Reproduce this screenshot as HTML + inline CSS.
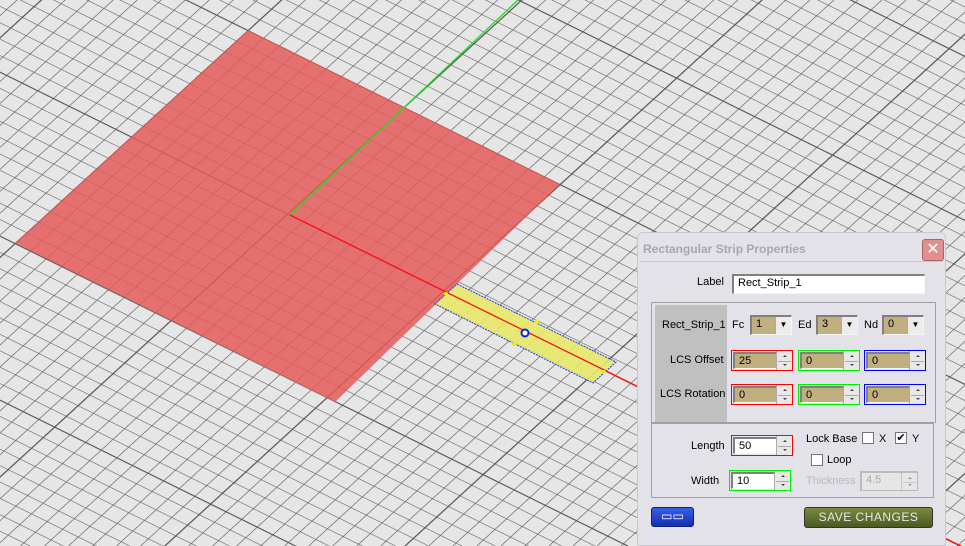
<!DOCTYPE html>
<html><head><style>
body{margin:0;width:965px;height:546px;overflow:hidden;background:#e6e6e6;font-family:Tahoma,"Liberation Sans",sans-serif;font-size:11px;}
#dlg{position:absolute;left:637px;top:232px;width:309px;height:314px;background:#e3e2e8;border:1px solid #c8c8d0;box-sizing:border-box;border-radius:6px 6px 0 0;}
.title{position:absolute;left:5px;top:9px;font-weight:bold;font-size:12px;color:#a7a7ae;}
.close{position:absolute;left:284px;top:6px;width:20px;height:20px;background:#e09090;border:1px solid #b06060;border-radius:3px;color:#fff;font-size:16px;line-height:19px;text-align:center;}
.abs{position:absolute;}
.lbl{position:absolute;color:#000;}
.inp{position:absolute;background:#fff;border-top:2px solid #808080;border-left:2px solid #808080;border-bottom:1px solid #f5f5f5;border-right:1px solid #f5f5f5;box-sizing:border-box;padding:1px 4px;}
.tan{background:#c0b080;}
.dd{position:absolute;right:0;top:0;width:16px;height:100%;background:#ececec;border-left:1px solid #aaa;box-sizing:border-box;font-size:8px;text-align:center;line-height:15px;}
.spin{position:absolute;right:0;top:0;width:16px;height:100%;background:#e8e8e8;border-left:1px solid #aaa;box-sizing:border-box;}
.spin:before{content:"";position:absolute;left:6px;top:2px;border:2px solid transparent;border-bottom-color:#444;}
.spin:after{content:"";position:absolute;left:6px;bottom:2px;border:2px solid transparent;border-top-color:#444;}
.spin i{position:absolute;left:1px;right:1px;top:50%;border-top:1px solid #aaa;}
.fr{position:absolute;border:1px solid;width:62px;height:21px;box-sizing:border-box;padding:1px;}
.fr .inp{position:static;width:100%;height:100%;}
.cb{position:absolute;width:12px;height:12px;background:#fff;border:1px solid #777;box-sizing:border-box;font-size:11px;line-height:10px;text-align:center;}
</style></head><body>
<svg width="965" height="546" style="position:absolute;left:0;top:0">
<defs>
<pattern id="g" width="10" height="10" patternUnits="userSpaceOnUse" patternTransform="matrix(1.56,0.77,-1.165,1.065,248,30)">
<path d="M0 0H10M0 0V10" stroke="#5e5e5e" stroke-width="0.8" fill="none"/>
</pattern>
<pattern id="G" width="100" height="100" patternUnits="userSpaceOnUse" patternTransform="matrix(1.56,0.77,-1.165,1.065,248,30)">
<path d="M0 0H100M0 0V100" stroke="#555" stroke-width="1.4" fill="none"/>
</pattern>
</defs>
<rect width="965" height="546" fill="#e6e6e6"/>
<rect width="965" height="546" fill="url(#g)"/>
<rect width="965" height="546" fill="url(#G)"/>
<polygon points="248,30 560,184 335,402 15,243" fill="#e35a5a" fill-opacity="0.85"/>
<polygon points="457,284 616,362 593,383 435,304" fill="#e8e86a" fill-opacity="0.9" stroke="#2030ff" stroke-dasharray="2,1"/>
<line x1="290" y1="215" x2="518" y2="0" stroke="#20e020" stroke-width="1.3"/>
<line x1="290" y1="215" x2="965" y2="548" stroke="#ff1010" stroke-width="1.3"/>
<circle cx="525" cy="333" r="3.5" fill="#fff" stroke="#1020e0" stroke-width="2"/>
<circle cx="446" cy="294" r="2" fill="#ee0"/><circle cx="537" cy="322" r="2" fill="#ee0"/><circle cx="514" cy="344" r="2" fill="#ee0"/><circle cx="604" cy="372" r="2" fill="#ee0"/>
</svg>
<div id="dlg">
<div class="title">Rectangular Strip Properties</div>
<div class="close">✕</div>
<div class="abs" style="left:2px;top:28px;right:2px;bottom:0;border-top:1px solid #c8c8d0"></div>
<div class="lbl" style="left:59px;top:43px">Label</div>
<div class="inp" style="left:94px;top:41px;width:193px;height:20px">Rect_Strip_1</div>
<div class="abs" style="left:13px;top:69px;width:283px;height:120px;border:1px solid #a0a0a0;border-bottom:none"></div>
<div class="abs" style="left:17px;top:72px;width:72px;height:117px;background:#c0c0c0"></div>
<div class="abs" style="left:13px;top:189px;width:283px;height:76px;border:1px solid #a0a0a0;border-top:2px solid #a0a0a0;box-sizing:border-box"></div>
<div class="lbl" style="left:24px;top:86px">Rect_Strip_1</div>
<div class="lbl" style="left:94px;top:86px">Fc</div>
<div class="inp tan" style="left:112px;top:82px;width:42px;height:20px">1<div class="dd">▼</div></div>
<div class="lbl" style="left:160px;top:86px">Ed</div>
<div class="inp tan" style="left:178px;top:82px;width:42px;height:20px">3<div class="dd">▼</div></div>
<div class="lbl" style="left:226px;top:86px">Nd</div>
<div class="inp tan" style="left:244px;top:82px;width:42px;height:20px">0<div class="dd">▼</div></div>
<div class="lbl" style="left:32px;top:121px">LCS Offset</div>
<div class="fr" style="left:93px;top:117px;border-color:#f00"><div class="inp tan">25<div class="spin"><i></i></div></div></div>
<div class="fr" style="left:160px;top:117px;border-color:#0e0"><div class="inp tan">0<div class="spin"><i></i></div></div></div>
<div class="fr" style="left:226px;top:117px;border-color:#00f"><div class="inp tan">0<div class="spin"><i></i></div></div></div>
<div class="lbl" style="left:22px;top:155px">LCS Rotation</div>
<div class="fr" style="left:93px;top:151px;border-color:#f00"><div class="inp tan">0<div class="spin"><i></i></div></div></div>
<div class="fr" style="left:160px;top:151px;border-color:#0e0"><div class="inp tan">0<div class="spin"><i></i></div></div></div>
<div class="fr" style="left:226px;top:151px;border-color:#00f"><div class="inp tan">0<div class="spin"><i></i></div></div></div>
<div class="lbl" style="left:53px;top:207px">Length</div>
<div class="fr" style="left:93px;top:202px;border-color:#f00"><div class="inp">50<div class="spin"><i></i></div></div></div>
<div class="lbl" style="left:53px;top:242px">Width</div>
<div class="fr" style="left:91px;top:237px;border-color:#0e0"><div class="inp">10<div class="spin"><i></i></div></div></div>
<div class="lbl" style="left:168px;top:200px">Lock Base</div>
<div class="cb" style="left:224px;top:199px"></div><div class="lbl" style="left:241px;top:200px">X</div>
<div class="cb" style="left:257px;top:199px">✔</div><div class="lbl" style="left:274px;top:200px">Y</div>
<div class="cb" style="left:173px;top:221px"></div><div class="lbl" style="left:189px;top:221px">Loop</div>
<div class="lbl" style="left:168px;top:242px;color:#b8b8b8">Thickness</div>
<div class="inp" style="left:222px;top:238px;width:58px;height:20px;background:#e6e6e6;color:#aaa;border-color:#bbb">4.5<div class="spin" style="opacity:.5"><i></i></div></div>
<div class="abs" style="left:13px;top:274px;width:43px;height:20px;background:linear-gradient(#3a5ee8,#1030b0);border:1px solid #102070;border-radius:3px;box-sizing:border-box;color:#fff;text-align:center;font-size:12px;line-height:17px">▭▭</div>
<div class="abs" style="left:166px;top:274px;width:129px;height:21px;background:linear-gradient(#7a8a40,#4a5a20);border:1px solid #333;border-radius:3px;box-sizing:border-box;color:#e8e8e8;text-align:center;font-size:12px;line-height:19px;letter-spacing:.5px">SAVE CHANGES</div>
</div>
</body></html>
